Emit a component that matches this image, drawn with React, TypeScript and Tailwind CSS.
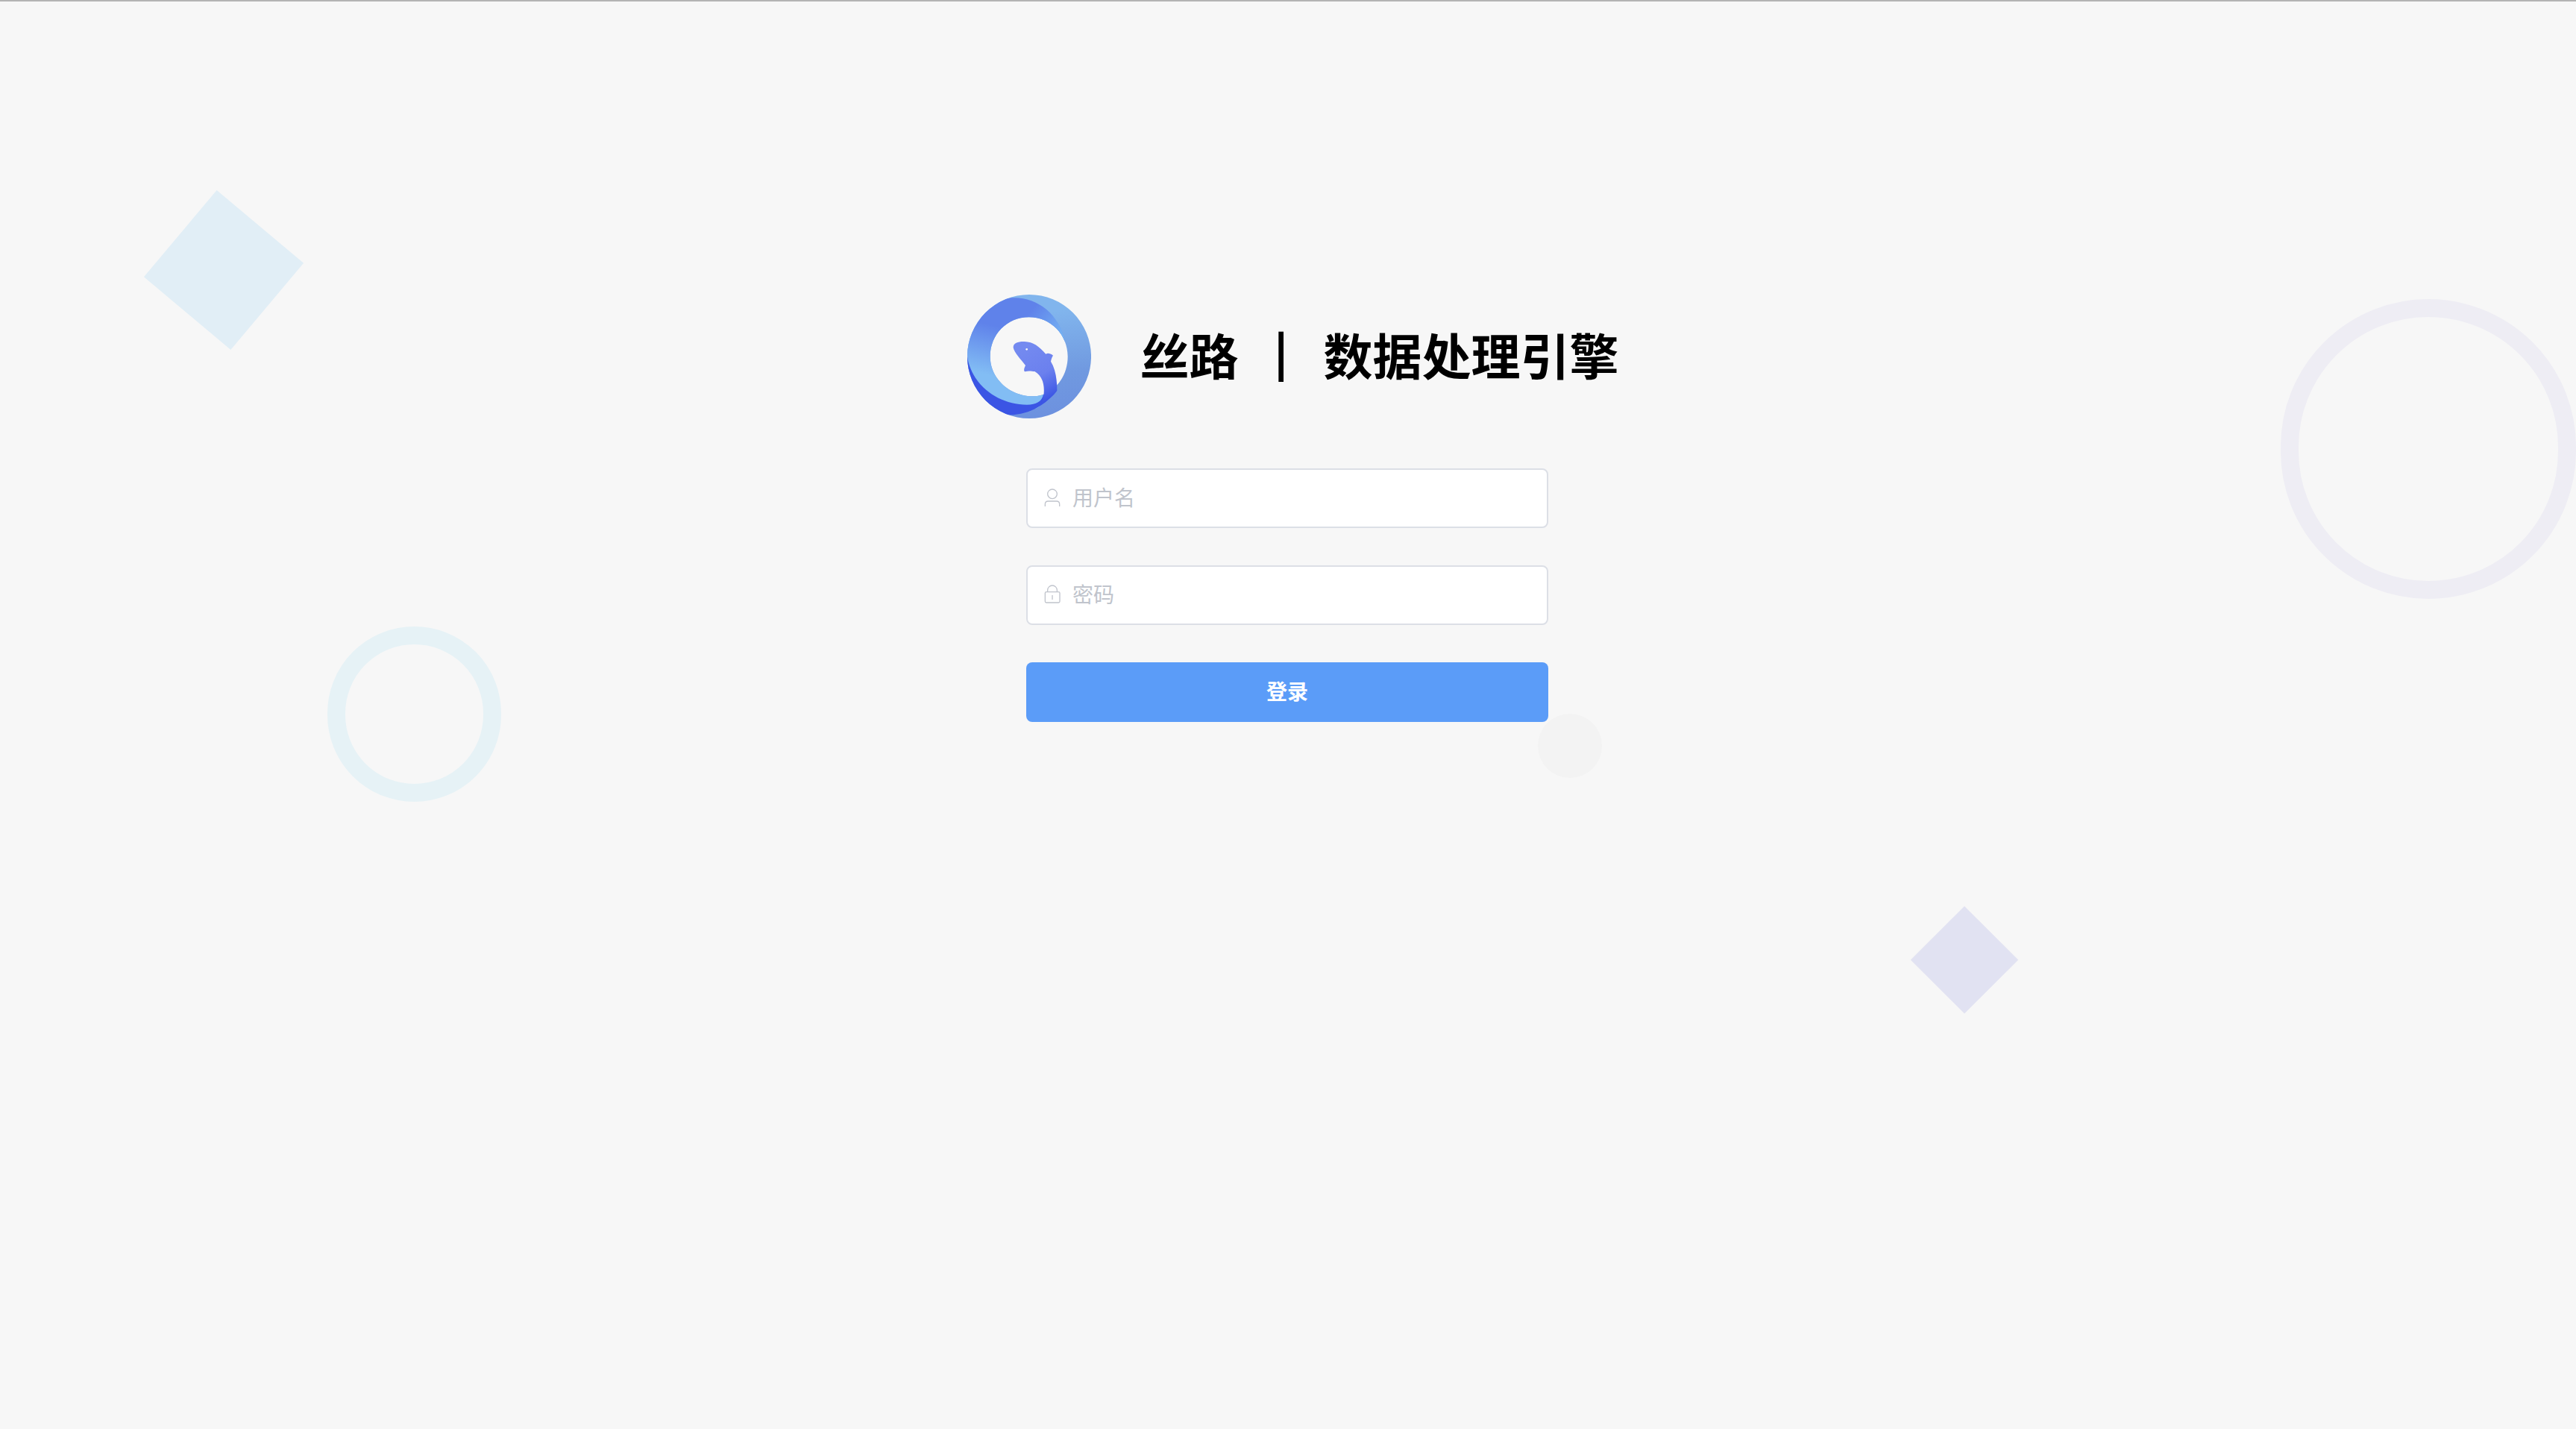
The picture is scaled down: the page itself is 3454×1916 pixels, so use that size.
import { FormEvent, useState } from 'react';

function Logo() {
  return (
    <svg viewBox="0 0 498 498" className="size-[166px] shrink-0" aria-hidden="true">
      <defs>
        <clipPath id="ring">
          <path
            clipRule="evenodd"
            d="M249 0a249 249 0 1 1 0 498a249 249 0 1 1 0-498ZM248 91C160 91 92 161 92 249C92 340 172 409 264 409C340 409 404 338 404 249C404 161 336 91 248 91Z"
          />
        </clipPath>
        <linearGradient id="right" x1="0.5" y1="0" x2="0.6" y2="1">
          <stop offset="0.15" stopColor="#81b5ed" />
          <stop offset="0.65" stopColor="#7099e0" />
          <stop offset="1" stopColor="#6d91df" />
        </linearGradient>
        <linearGradient id="left" gradientUnits="userSpaceOnUse" x1="190" y1="20" x2="90" y2="440">
          <stop offset="0.28" stopColor="#5f82ea" />
          <stop offset="0.74" stopColor="#82bdf4" />
          <stop offset="1" stopColor="#82bdf4" />
        </linearGradient>
        <linearGradient id="glow" gradientUnits="userSpaceOnUse" x1="260" y1="60" x2="385" y2="170">
          <stop offset="0" stopColor="#76b5f3" stopOpacity="0" />
          <stop offset="1" stopColor="#76b5f3" />
        </linearGradient>
        <linearGradient id="fish" x1="0.2" y1="0" x2="0.6" y2="1">
          <stop offset="0.1" stopColor="#748af0" />
          <stop offset="0.6" stopColor="#6b80ee" />
          <stop offset="0.85" stopColor="#4e66e8" />
          <stop offset="1" stopColor="#3b55e4" />
        </linearGradient>
      </defs>
      {/* Ring */}
      <g clipPath="url(#ring)">
        <rect width="498" height="498" fill="url(#right)" />
        <path
          fill="url(#left)"
          d="M168 14C270 3 368 70 393 190L308 300V402C306 440 290 460 262 460C120 460 20 370 0 262C-20 140 65 20 168 14Z"
        />
        <path fill="url(#glow)" d="M168 14C270 3 368 70 393 190L248 150Z" />
        <path
          fill="#3b55e4"
          d="M0 250C18 365 125 443 240 443C278 443 300 430 306 402L360 386C318 440 255 482 170 484L0 498Z"
        />
      </g>
      {/* Fish */}
      <path
        fill="url(#fish)"
        d="M185 213C184 194 206 188 230 189C266 190 288 208 316 239C322 235 333 235 345 245C340 252 338 260 336 269C355 300 361 340 361 386C348 406 318 429 292 444C303 434 307 420 308 396C311 354 297 323 271 309C260 309 248 305 232 310C226 308 228 297 234 285C215 260 188 232 185 213Z"
      />
      <circle cx="239" cy="220" r="4" fill="#f7f7f7" />
    </svg>
  );
}

function UserIcon() {
  return (
    <svg viewBox="0 0 84 84" className="size-7" fill="none" stroke="#c0c4cc" strokeWidth="4" aria-hidden="true">
      <circle cx="42" cy="28" r="19" />
      <path d="M13 78V69Q13 57 25 57H59Q71 57 71 69V78" />
    </svg>
  );
}

function LockIcon() {
  return (
    <svg viewBox="0 0 84 84" className="size-7" fill="none" stroke="#c0c4cc" strokeWidth="4" aria-hidden="true">
      <rect x="13" y="32" width="59" height="43" rx="5" />
      <path d="M23 31V25A19 19 0 0 1 61 25V31M42 45V63" />
    </svg>
  );
}

const inputClass =
  'h-20 w-full rounded-lg border-2 border-[#dcdfe6] bg-white pb-1 pl-[60px] pr-7 text-[28px] text-[#606266] outline-none placeholder:text-[#c0c4cc] focus:border-[#5b9cf8]';

export default function App() {
  const [username, setUsername] = useState('');
  const [password, setPassword] = useState('');

  function handleSubmit(e: FormEvent) {
    e.preventDefault();
  }

  return (
    <div className="relative min-h-screen overflow-hidden border-t-2 border-[#b4b4b4] bg-[#f7f7f7] font-['Noto_Sans_CJK_SC',sans-serif]">
      {/* Background shapes */}
      <div className="absolute left-[224px] top-[284px] size-[152px] rotate-40 bg-[#e1eef6]" />
      <div className="absolute left-[439px] top-[838px] h-[235px] w-[233px] rounded-full border-24 border-[#e6f2f6]" />
      <div className="absolute right-0 top-[399px] h-[402px] w-[396px] rounded-full border-24 border-[#eeedf4]" />
      <div className="absolute left-[2583px] top-[1234px] size-[102px] rotate-45 bg-[#e1e2f2]" />
      <div className="absolute left-[2062px] top-[955px] size-[86px] rounded-full bg-[#f3f3f3]" />

      <main className="relative flex flex-col items-center pr-0.5 pt-[393px]">
        <div className="flex items-center gap-[65px] pl-4">
          <Logo />
          <h1 className="flex items-center gap-[47px] whitespace-nowrap pb-2 text-[66px] font-bold leading-none text-black">
            <span>丝路</span>
            <span className="font-['Roboto',sans-serif] text-[80px]">|</span>
            <span>数据处理引擎</span>
          </h1>
        </div>

        <form onSubmit={handleSubmit} className="mt-[67px] flex w-full max-w-[700px] flex-col gap-[50px]">
          <div className="relative">
            <span className="absolute inset-y-0 left-[21px] flex items-center pb-0.5">
              <UserIcon />
            </span>
            <input
              type="text"
              aria-label="用户名"
              placeholder="用户名"
              value={username}
              onChange={(e) => setUsername(e.target.value)}
              className={inputClass}
            />
          </div>
          <div className="relative">
            <span className="absolute inset-y-0 left-[21px] flex items-center pb-0.5">
              <LockIcon />
            </span>
            <input
              type="password"
              aria-label="密码"
              placeholder="密码"
              value={password}
              onChange={(e) => setPassword(e.target.value)}
              className={inputClass}
            />
          </div>
          <button type="submit" className="h-20 rounded-lg bg-[#5b9cf8] pb-1 text-[28px] font-bold text-white">
            登录
          </button>
        </form>
      </main>
    </div>
  );
}
